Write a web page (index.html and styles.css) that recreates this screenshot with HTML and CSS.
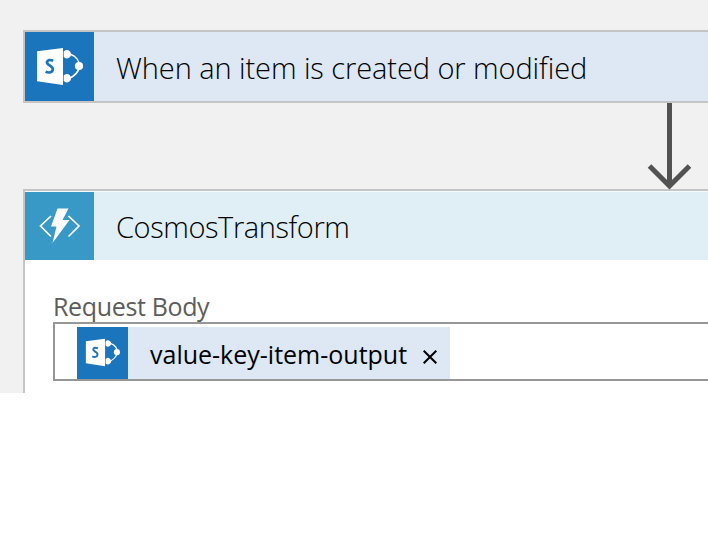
FILE: index.html
```html
<!DOCTYPE html>
<html lang="en">
<head>
<meta charset="utf-8">
<title>Workflow designer</title>
<link rel="stylesheet" href="styles.css">
</head>
<body>
<svg class="defs" aria-hidden="true">
  <symbol id="sharepoint" viewBox="0 0 69 69">
    <path d="M46 22.5A13 13 0 0 1 54.5 34.5Q53 43 43 47" fill="none" stroke="#fff" stroke-width="1.6"/>
    <path d="M12 19.2 38 16v37L12 49.2Z" fill="#fff"/>
    <path d="M38.7 19.5a4.2 4.2 0 1 1 0 5.5ZM38.7 43.5a4.2 4.2 0 1 1 0 5.5Z" fill="#fff"/>
    <circle cx="54" cy="34" r="4.1" fill="#fff"/>
    <path d="M28.2 28.7Q23 26.8 22 30c-.7 3.3 6 3.4 5.8 7.3-.2 3.8-4.8 3.7-7.2 2.3" fill="none" stroke="#1b75bc" stroke-width="2.7"/>
  </symbol>
</svg>
<main class="canvas">
  <section class="card trigger">
    <div class="icon"><svg viewBox="0 0 69 69"><use href="#sharepoint"/></svg></div>
    <h2 class="title title-trigger">When an item is created or modified</h2>
  </section>
  <div class="connector">
    <svg width="44" height="87" viewBox="0 0 44 87"><path d="M22.500 0v83M2.500 63l20 20 20-20" fill="none" stroke="#525252" stroke-width="5"/></svg>
  </div>
  <section class="card action">
    <header class="head">
      <div class="icon function"><svg viewBox="0 0 69 68"><path d="M26 24 15.5 34 26 44.5M43.500 24 54 34 43.500 44.500" fill="none" stroke="#fff" stroke-width="1.7"/><path d="M32.500 16.500h11L37.500 28h7L27.500 51l4-16.500h-5.500Z" fill="#fff"/></svg></div>
      <h2 class="title title-action">CosmosTransform</h2>
    </header>
    <div class="body">
      <div class="label"><span>Request Body</span></div>
      <div class="field">
        <div class="token">
          <div class="token-icon"><svg viewBox="0 0 69 69"><use href="#sharepoint"/></svg></div>
          <span class="token-text">value-key-item-output</span>
          <svg class="close" viewBox="0 0 14 14"><path d="m.7.7 12.600 12.600M13.300.7.7 13.300" stroke="#000" stroke-width="2"/></svg>
        </div>
      </div>
    </div>
  </section>
</main>
</body>
</html>
```
FILE: styles.css
```css
* { box-sizing: border-box; }
body {
  margin: 0;
  background: #fff;
  font-family: "Open Sans", "Noto Sans", sans-serif;
  color: #000;
  overflow: hidden;
}
.defs { display: none; }
.canvas {
  height: 393px;
  padding: 30px 0 0 23px;
  background: #f1f1f1;
  overflow: hidden;
}
.card {
  border: 2px solid #c5c5c5;
  border-right: 0;
}
.trigger {
  display: flex;
  height: 73px;
  background: #dde8f4;
}
.icon {
  width: 69px;
  flex: none;
  background: #1b75bc;
}
svg { display: block; }
.function { background: #3999c6; }
.title {
  margin: 0 0 0 22px;
  font-size: 29px;
  font-weight: 300;
  line-height: 72px;
  white-space: nowrap;
}
.title-trigger { letter-spacing: -0.08px; }
.title-action {
  letter-spacing: -0.42px;
  line-height: 70px;
}
.connector {
  height: 86px;
  padding-left: 624px;
}
.action {
  height: 220px;
  background: #fff;
}
.head {
  display: flex;
  height: 69px;
  border-top: 1px solid #f5fafc;
  background: #e0eff6;
}
.body { padding: 32px 0 0 28px; }
.label {
  height: 30px;
  color: #5c5c5c;
  font-size: 25px;
  letter-spacing: -0.35px;
  line-height: 28px;
  white-space: nowrap;
}
.field {
  height: 59px;
  padding: 3px 0 0 22px;
  border: 2px solid #979797;
  border-right: 0;
}
.token {
  display: flex;
  width: 373px;
  height: 52px;
  background: #dde8f4;
}
.token-icon {
  width: 51px;
  flex: none;
  background: #1b75bc;
}
.token-text {
  width: 258px;
  margin-left: 22px;
  font-size: 25px;
  line-height: 54px;
  white-space: nowrap;
}
.close {
  width: 14px;
  height: 14px;
  margin: 23px 0 0 15px;
}
```
